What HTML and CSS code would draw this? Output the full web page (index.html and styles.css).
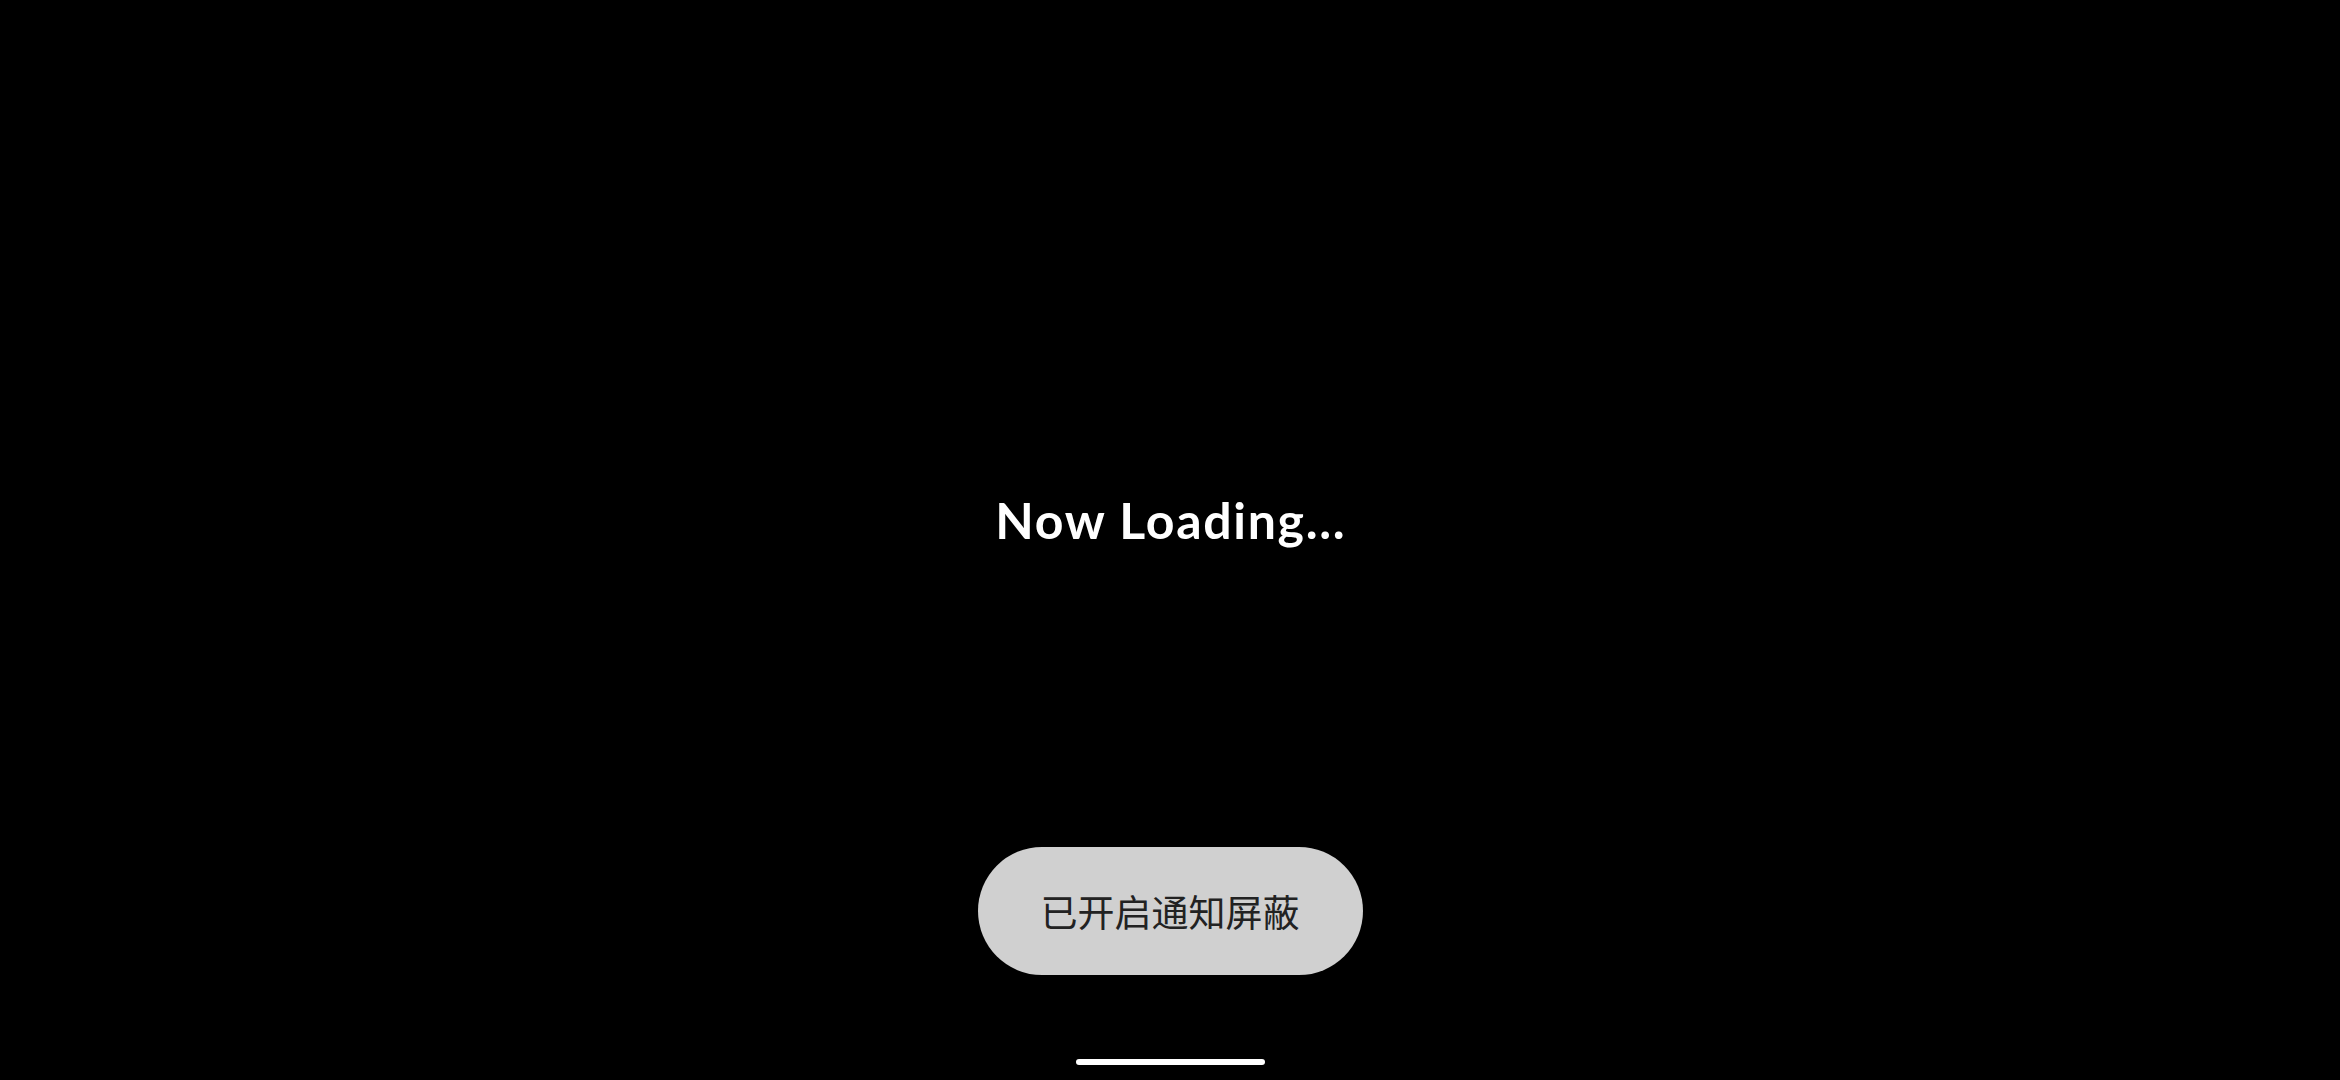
FILE: index.html
```html
<!DOCTYPE html>
<html lang="zh-CN">
<head>
<meta charset="utf-8">
<title>Now Loading</title>
<link rel="stylesheet" href="styles.css">
</head>
<body>
<main class="screen">
  <div class="loading">Now Loading...</div>
  <div class="toast"><span class="toast-text">已开启通知屏蔽</span></div>
  <div class="home-bar"></div>
</main>
</body>
</html>
```
FILE: styles.css
```css
html, body {
  margin: 0;
  padding: 0;
  background: #000;
}
.screen {
  width: 2340px;
  height: 1080px;
  display: flex;
  flex-direction: column;
  align-items: center;
  overflow: hidden;
}
.loading {
  margin-top: 490px;
  height: 60px;
  line-height: 60px;
  font-family: Lato, "Open Sans", sans-serif;
  font-weight: 700;
  font-size: 50px;
  color: #fff;
  letter-spacing: 1.7px;
  padding-left: 1.7px;
}
.toast {
  margin-top: 297px;
  width: 385px;
  height: 128px;
  border-radius: 64px;
  background: #d0d0d0;
  display: flex;
  align-items: center;
  justify-content: center;
}
.toast-text {
  font-family: "Noto Sans CJK SC", sans-serif;
  font-size: 37px;
  color: #222;
  line-height: 1;
}
.home-bar {
  margin-top: 84px;
  width: 189px;
  height: 6px;
  border-radius: 3px;
  background: #fff;
}
```
